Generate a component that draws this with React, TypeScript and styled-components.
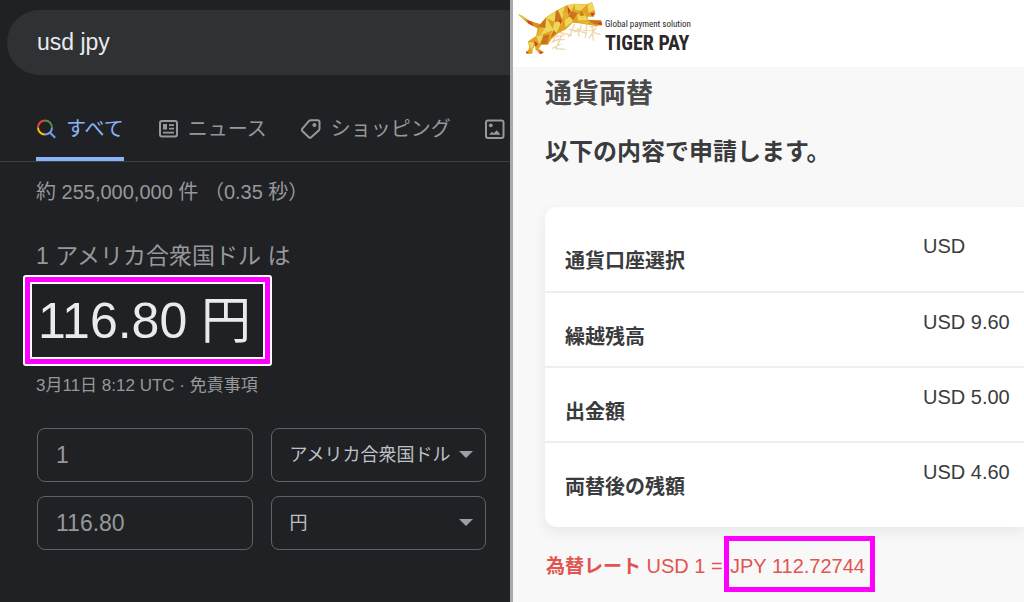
import React from "react";
import styled, { createGlobalStyle } from "styled-components";

const sans = `"Liberation Sans", "Noto Sans CJK JP", sans-serif`;

const GlobalStyle = createGlobalStyle`
  *, *::before, *::after { box-sizing: border-box; }
  body {
    margin: 0;
    font-family: ${sans};
    background: #202124;
  }
  h1, h2, p { margin: 0; }
`;

const Page = styled.main`
  display: grid;
  grid-template-columns: 255fr 257fr;
  min-height: 100vh;
  overflow: hidden;
`;

/* ---------- search results ---------- */

const SearchPane = styled.section`
  min-width: 0;
  overflow: hidden;
  background: #202124;
  color: #96989b;
`;

const SearchBox = styled.input`
  display: block;
  width: calc(100% - 7px);
  height: 65px;
  margin: 10px 0 0 7px;
  padding: 0 30px;
  border: 0;
  border-radius: 33px 0 0 33px;
  background: #303134;
  color: #e8eaed;
  font: 23px ${sans};
  outline: none;
`;

const Tabs = styled.nav`
  display: flex;
  gap: 34px;
  margin-top: 26px;
  padding-left: 36px;
  border-bottom: 1px solid #3c4043;
`;

const Tab = styled.a<{ $active?: boolean }>`
  display: flex;
  flex: none;
  align-items: center;
  gap: 10px;
  height: 60px;
  border-bottom: 4px solid ${(p) => (p.$active ? "#8ab4f8" : "transparent")};
  color: ${(p) => (p.$active ? "#8ab4f8" : "#96989b")};
  font-size: 20px;
  line-height: 28px;
  text-decoration: none;
  white-space: nowrap;
`;

const TabIcon = styled.svg`
  flex: none;
  width: 20px;
  height: 20px;
  fill: none;
  stroke: currentColor;
  stroke-width: 2;
`;

const Results = styled.div`
  padding: 15px 24px 0 36px;
`;

const Stats = styled.p`
  font-size: 20px;
  line-height: 30px;
  white-space: nowrap;
`;

const Base = styled.p`
  margin-top: 34px;
  font-size: 23px;
  line-height: 30px;
  white-space: nowrap;
`;

const Amount = styled.strong`
  display: block;
  width: fit-content;
  margin: 4px 0 0 -13px;
  border: 2px solid #fff;
  border-radius: 3px;
  background: #ff00ff;
  padding: 5px;
  color: #e8eaed;
  font-size: 50px;
  font-weight: 400;
  line-height: 71px;
  white-space: nowrap;
`;

const AmountInner = styled.span`
  display: block;
  padding: 2px 12px 0 6px;
  border: 2px solid #fff;
  background: #202124;
`;

const Updated = styled.p`
  margin-top: 8px;
  font-size: 17px;
  line-height: 24px;
  white-space: nowrap;
`;

const Converter = styled.form`
  display: grid;
  grid-template-columns: 1fr 1fr;
  gap: 14px 18px;
  margin-top: 30px;
  padding-left: 1px;
`;

const AmountInput = styled.input`
  width: 100%;
  min-width: 0;
  height: 54px;
  padding: 0 18px;
  border: 1px solid #5f6368;
  border-radius: 8px;
  background: transparent;
  color: #96989b;
  font: 23px ${sans};
`;

const SelectWrap = styled.div`
  position: relative;
`;

const CurrencySelect = styled.select`
  appearance: none;
  width: 100%;
  height: 54px;
  padding: 0 24px 0 18px;
  border: 1px solid #5f6368;
  border-radius: 8px;
  background: transparent;
  color: #bdc1c6;
  font: 18px ${sans};
`;

const Caret = styled.svg`
  position: absolute;
  top: 23px;
  right: 13px;
  width: 14px;
  height: 7px;
  fill: #9aa0a6;
  pointer-events: none;
`;

/* ---------- wallet exchange ---------- */

const WalletPane = styled.section`
  min-width: 0;
  border-left: 3px solid #a9a9a9;
  background: #f8f8f8;
  color: #3a3b3d;
`;

const WalletHeader = styled.header`
  height: 67px;
  padding-left: 4px;
  background: #fff;
`;

const Brand = styled.a`
  display: flex;
  color: #2b2728;
  text-decoration: none;
`;

const Tiger = styled.svg`
  flex: none;
  width: 87px;
  height: 56px;
`;

const BrandText = styled.span`
  display: flex;
  flex-direction: column;
  padding: 18px 0 0 1px;
  font-family: "Roboto Condensed", "Open Sans Condensed", "Liberation Sans", sans-serif;
  white-space: nowrap;
`;

const Tagline = styled.span`
  font-size: 9px;
  line-height: 12px;
`;

const BrandName = styled.span`
  font-size: 20px;
  font-weight: 700;
  line-height: 26px;
`;

const WalletBody = styled.div`
  padding: 9px 0 0 32px;
`;

const Title = styled.h1`
  color: #4a4a4b;
  font-size: 27px;
  line-height: 36px;
`;

const Lead = styled.h2`
  margin-top: 23px;
  font-size: 24px;
  line-height: 34px;
`;

const Card = styled.div`
  margin-top: 38px;
  padding: 10px 0;
  border-radius: 12px 0 0 12px;
  background: #fff;
  box-shadow: 0 5px 14px rgba(0, 0, 0, 0.07);
`;

const Details = styled.table`
  width: 100%;
  border-collapse: collapse;
  font-size: 20px;
  line-height: 30px;

  tr + tr {
    border-top: 2px solid #eeeeef;
  }
`;

const Label = styled.th`
  height: 75px;
  padding: 29px 0 0 20px;
  text-align: left;
  vertical-align: top;
`;

const Value = styled.td`
  width: 101px;
  padding: 14px 0 0;
  vertical-align: top;
  white-space: nowrap;
`;

const Rate = styled.p`
  display: flex;
  align-items: flex-start;
  margin-top: 9px;
  color: #e35450;
  font-size: 20px;
  line-height: 30px;
  white-space: nowrap;
`;

const RateText = styled.span`
  width: 179px;
  padding: 15px 0 0 1px;
`;

const RateName = styled.b`
  font-size: 19px;
`;

const RateValue = styled.span`
  padding: 10px 5px 6px 1px;
  border: 5px solid #ff00ff;
`;

const rows = [
  ["通貨口座選択", "USD"],
  ["繰越残高", "USD 9.60"],
  ["出金額", "USD 5.00"],
  ["両替後の残額", "USD 4.60"],
];

function SearchIcon() {
  return (
    <TabIcon viewBox="0 0 20 20" aria-hidden="true">
      <path d="M2 8.500a7 7 0 0 1 7-7" stroke="#ea4335" />
      <path d="M9 1.500a7 7 0 0 1 7 7" stroke="#4f8f45" />
      <path d="M2 8.500a7 7 0 0 0 7 7" stroke="#fbbc04" />
      <path d="M16 8.500a7 7 0 0 1-7 7M13.600 13.200l5.600 5.600" stroke="#6ea0ee" />
    </TabIcon>
  );
}

function NewsIcon() {
  return (
    <TabIcon viewBox="0 0 20 20" aria-hidden="true">
      <rect x="2" y="2" width="17" height="15.500" rx="2" />
      <path d="M5 5h4v5.500H5z" fill="currentColor" stroke="none" />
      <path d="M11 6.200h5M11 9.600h5M5 13.600h11" strokeWidth="1.700" />
    </TabIcon>
  );
}

function TagIcon() {
  return (
    <TabIcon viewBox="0 0 20 20" aria-hidden="true">
      <path d="M10 1.200h6.800a1.700 1.700 0 0 1 1.700 1.700V9.600a3 3 0 0 1-.8 2L10.200 18.200a1.700 1.700 0 0 1-2.400 0L1.400 12a1.700 1.700 0 0 1 0-2.300L7.800 2.200a3 3 0 0 1 2.200-1z" />
      <circle cx="13.400" cy="6" r="2" fill="currentColor" stroke="none" />
    </TabIcon>
  );
}

function PictureIcon() {
  return (
    <TabIcon viewBox="0 0 20 20" aria-hidden="true">
      <rect x="1" y="1.500" width="17.500" height="17.500" rx="2" />
      <circle cx="5.800" cy="6.300" r="1.900" fill="currentColor" stroke="none" />
      <path d="M4 15.700 7 12.700l1.600 1.600L11.800 11.300 15.500 15.700z" fill="currentColor" stroke="none" />
    </TabIcon>
  );
}

function TigerLogo() {
  return (
    <Tiger viewBox="15 0 261 168" aria-hidden="true">
      <g fill="none" stroke="#f0d6ae" strokeWidth="4">
        <path d="M118 112l38-6M140 92l-18 34 20-10M126 122l32-4M150 104l-18 42 28 2M120 146l26-14M136 96l44 10M170 88l30 6M188 72l-14 34M196 84l6 26M176 104l-8 8M208 74l-6 20 24 6M224 72l-4 42M212 92l34-4M240 78l4 44M252 84l-22 32M246 98l20 6M186 96l24-8M232 80l24 0" />
      </g>
      <path fill="#e3a321" d="M78 80 102 52 132 32 164 16 188 11 222 13 232 10 240 6 250 38 246 50 226 50 230 60 268 61 271 76 252 78 202 70 182 68 162 88 134 102 118 118 108 134 88 134 80 146 96 157 84 163 70 148 70 134 62 148 61 161 41 161 52 144 48 124 72 108z" />
      <path fill="#d89522" d="M18 42 32 48 52 62 84 72 82 88 50 72 30 55z" />
      <path fill="#e9c94b" d="M18 42 32 48 44 60 32 57z" />
      <path fill="#d9452b" d="M46 59 60 66 64 78 48 70z" />
      <path fill="#ecd65b" d="M102 53 132 33 128 66zM104 54 124 90 84 106zM164 17 188 12 178 34zM136 32 158 20 150 62zM128 66 150 62 134 98 118 102zM188 12 224 14 206 32 190 30zM226 14 240 7 248 30 230 38zM196 44 216 40 228 60 198 62zM72 108 96 104 82 132zM50 126 68 128 58 150zM158 60 178 46 182 66 160 82z" />
      <path fill="#c9741c" d="M132 33 138 31 152 62 128 66zM78 80 102 54 100 84zM178 34 196 40 184 60 170 48zM206 32 218 46 204 48zM124 90 134 100 116 114zM94 106 112 104 106 132 86 133zM228 60 267 62 270 76 246 73z" />
      <path fill="#e5b52e" d="M84 80 98 86 84 106 74 108zM150 32 172 42 158 60zM210 60 232 62 228 73 204 70z" />
      <path fill="#cf3f28" d="M138 60 150 62 146 72zM236 38 249 40 240 50zM66 122 78 132 70 140zM82 152 95 158 84 162zM166 18 176 33 170 44zM252 68 269 67 270 76zM44 153 52 160 42 160z" />
    </Tiger>
  );
}

function CurrencyField({ label, value }: { label: string; value: string }) {
  return (
    <SelectWrap>
      <CurrencySelect aria-label={label} defaultValue={value}>
        <option>アメリカ合衆国ドル</option>
        <option>円</option>
      </CurrencySelect>
      <Caret viewBox="0 0 14 7" aria-hidden="true">
        <path d="M0 0h14L7 7z" />
      </Caret>
    </SelectWrap>
  );
}

export default function App() {
  return (
    <>
      <GlobalStyle />
      <Page>
        <SearchPane>
          <SearchBox type="text" aria-label="検索" defaultValue="usd jpy" />
          <Tabs>
            <Tab href="#all" $active>
              <SearchIcon />
              すべて
            </Tab>
            <Tab href="#news">
              <NewsIcon />
              ニュース
            </Tab>
            <Tab href="#shopping">
              <TagIcon />
              ショッピング
            </Tab>
            <Tab href="#images" aria-label="画像">
              <PictureIcon />
            </Tab>
          </Tabs>
          <Results>
            <Stats>約 255,000,000 件 （0.35 秒）</Stats>
            <Base>1 アメリカ合衆国ドル は</Base>
            <Amount>
              <AmountInner>116.80 円</AmountInner>
            </Amount>
            <Updated>3月11日 8:12 UTC · 免責事項</Updated>
            <Converter>
              <AmountInput type="text" aria-label="換算元の金額" defaultValue="1" />
              <CurrencyField label="換算元の通貨" value="アメリカ合衆国ドル" />
              <AmountInput type="text" aria-label="換算先の金額" defaultValue="116.80" />
              <CurrencyField label="換算先の通貨" value="円" />
            </Converter>
          </Results>
        </SearchPane>

        <WalletPane>
          <WalletHeader>
            <Brand href="#home">
              <TigerLogo />
              <BrandText>
                <Tagline>Global payment solution</Tagline>
                <BrandName>TIGER PAY</BrandName>
              </BrandText>
            </Brand>
          </WalletHeader>
          <WalletBody>
            <Title>通貨両替</Title>
            <Lead>以下の内容で申請します。</Lead>
            <Card>
              <Details>
                <tbody>
                  {rows.map(([label, value]) => (
                    <tr key={label}>
                      <Label scope="row">{label}</Label>
                      <Value>{value}</Value>
                    </tr>
                  ))}
                </tbody>
              </Details>
            </Card>
            <Rate>
              <RateText>
                <RateName>為替レート</RateName> USD 1 =
              </RateText>
              <RateValue>JPY 112.72744</RateValue>
            </Rate>
          </WalletBody>
        </WalletPane>
      </Page>
    </>
  );
}
